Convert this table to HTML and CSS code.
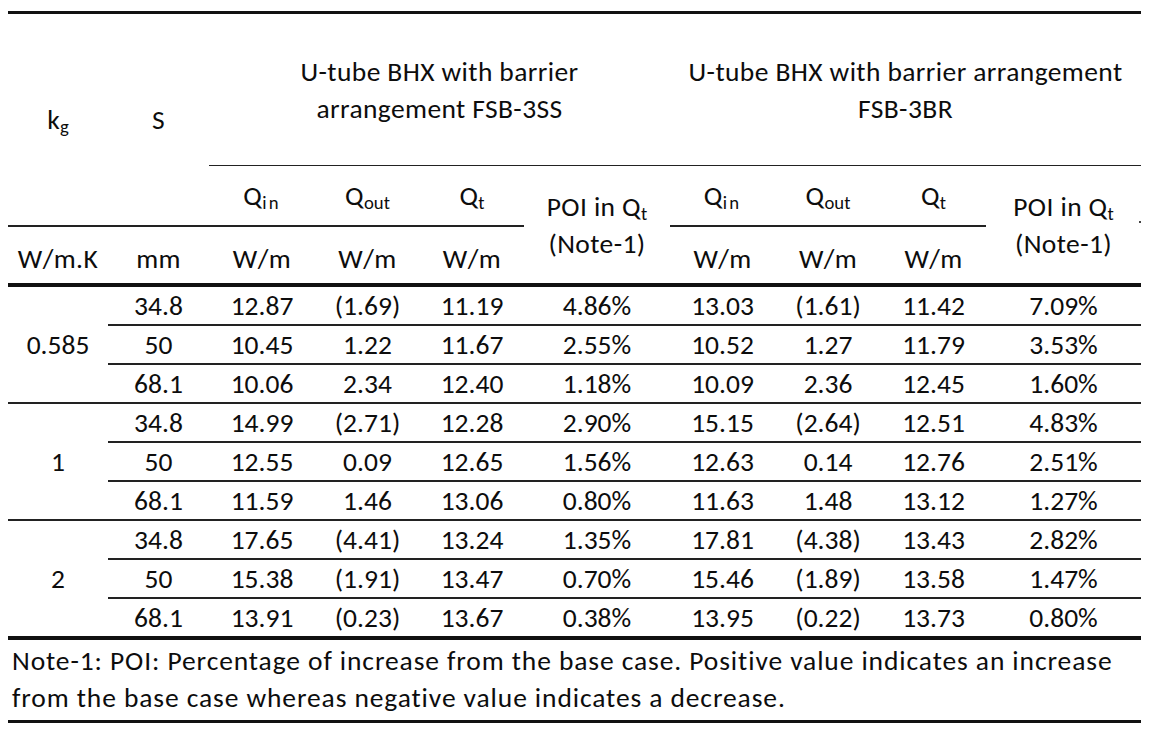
FILE: index.html
```html
<!DOCTYPE html>
<html lang="en">
<head>
<meta charset="utf-8">
<title>U-tube BHX barrier arrangements</title>
<link rel="stylesheet" href="styles.css">
</head>
<body>
<div class="page">
<table class="results">
  <colgroup>
    <col class="w-kg"><col class="w-s"><col class="w-q1"><col class="w-q2"><col class="w-q3"><col class="w-poi1">
    <col class="w-q4"><col class="w-q5"><col class="w-q6"><col class="w-poi2">
  </colgroup>
  <thead>
    <tr class="row-group">
      <th rowspan="2" class="h-left line-mid">k<sub>g</sub></th>
      <th rowspan="2" class="h-left line-mid">S</th>
      <th colspan="4" class="h-group">U-tube BHX with barrier<br>arrangement FSB-3SS</th>
      <th colspan="4" class="h-group">U-tube BHX with barrier arrangement<br>FSB-3BR</th>
    </tr>
    <tr class="row-q">
      <th class="line-mid">Q<sub class="sp">in</sub></th>
      <th class="line-mid">Q<sub>out</sub></th>
      <th class="line-mid">Q<sub>t</sub></th>
      <th rowspan="2" class="h-poi line-thick">POI in Q<sub>t</sub><br>(Note-1)</th>
      <th class="line-mid">Q<sub class="sp">in</sub></th>
      <th class="line-mid">Q<sub>out</sub></th>
      <th class="line-mid">Q<sub>t</sub></th>
      <th rowspan="2" class="h-poi line-thick dot-cell">POI in Q<sub>t</sub><br>(Note-1)<span class="dot"></span></th>
    </tr>
    <tr class="row-unit">
      <th class="line-thick">W/m.K</th>
      <th class="line-thick">mm</th>
      <th class="line-thick">W/m</th>
      <th class="line-thick">W/m</th>
      <th class="line-thick">W/m</th>
      <th class="line-thick">W/m</th>
      <th class="line-thick">W/m</th>
      <th class="line-thick">W/m</th>
    </tr>
  </thead>
  <tbody>
    <tr>
      <td rowspan="3" class="kg line-row">0.585</td>
      <td class="line-row">34.8</td><td class="line-row">12.87</td><td class="line-row">(1.69)</td><td class="line-row">11.19</td><td class="line-row">4.86%</td>
      <td class="line-row">13.03</td><td class="line-row">(1.61)</td><td class="line-row">11.42</td><td class="line-row">7.09%</td>
    </tr>
    <tr>
      <td class="line-row">50</td><td class="line-row">10.45</td><td class="line-row"><span class="ph">(</span>1.22<span class="ph">)</span></td><td class="line-row">11.67</td><td class="line-row">2.55%</td>
      <td class="line-row">10.52</td><td class="line-row"><span class="ph">(</span>1.27<span class="ph">)</span></td><td class="line-row">11.79</td><td class="line-row">3.53%</td>
    </tr>
    <tr>
      <td class="line-row">68.1</td><td class="line-row">10.06</td><td class="line-row"><span class="ph">(</span>2.34<span class="ph">)</span></td><td class="line-row">12.40</td><td class="line-row">1.18%</td>
      <td class="line-row">10.09</td><td class="line-row"><span class="ph">(</span>2.36<span class="ph">)</span></td><td class="line-row">12.45</td><td class="line-row">1.60%</td>
    </tr>
    <tr>
      <td rowspan="3" class="kg line-row">1</td>
      <td class="line-row">34.8</td><td class="line-row">14.99</td><td class="line-row">(2.71)</td><td class="line-row">12.28</td><td class="line-row">2.90%</td>
      <td class="line-row">15.15</td><td class="line-row">(2.64)</td><td class="line-row">12.51</td><td class="line-row">4.83%</td>
    </tr>
    <tr>
      <td class="line-row">50</td><td class="line-row">12.55</td><td class="line-row"><span class="ph">(</span>0.09<span class="ph">)</span></td><td class="line-row">12.65</td><td class="line-row">1.56%</td>
      <td class="line-row">12.63</td><td class="line-row"><span class="ph">(</span>0.14<span class="ph">)</span></td><td class="line-row">12.76</td><td class="line-row">2.51%</td>
    </tr>
    <tr>
      <td class="line-row">68.1</td><td class="line-row">11.59</td><td class="line-row"><span class="ph">(</span>1.46<span class="ph">)</span></td><td class="line-row">13.06</td><td class="line-row">0.80%</td>
      <td class="line-row">11.63</td><td class="line-row"><span class="ph">(</span>1.48<span class="ph">)</span></td><td class="line-row">13.12</td><td class="line-row">1.27%</td>
    </tr>
    <tr>
      <td rowspan="3" class="kg line-thick">2</td>
      <td class="line-row">34.8</td><td class="line-row">17.65</td><td class="line-row">(4.41)</td><td class="line-row">13.24</td><td class="line-row">1.35%</td>
      <td class="line-row">17.81</td><td class="line-row">(4.38)</td><td class="line-row">13.43</td><td class="line-row">2.82%</td>
    </tr>
    <tr>
      <td class="line-row">50</td><td class="line-row">15.38</td><td class="line-row">(1.91)</td><td class="line-row">13.47</td><td class="line-row">0.70%</td>
      <td class="line-row">15.46</td><td class="line-row">(1.89)</td><td class="line-row">13.58</td><td class="line-row">1.47%</td>
    </tr>
    <tr>
      <td class="line-thick">68.1</td><td class="line-thick">13.91</td><td class="line-thick">(0.23)</td><td class="line-thick">13.67</td><td class="line-thick">0.38%</td>
      <td class="line-thick">13.95</td><td class="line-thick">(0.22)</td><td class="line-thick">13.73</td><td class="line-thick">0.80%</td>
    </tr>
  </tbody>
  <tfoot>
    <tr>
      <td colspan="10" class="note">Note-1: POI: Percentage of increase from the base case. Positive value indicates an increase<br>from the base case whereas negative value indicates a decrease.</td>
    </tr>
  </tfoot>
</table>
</div>
</body>
</html>
```
FILE: styles.css
```css
html, body {
  margin: 0;
  padding: 0;
  background: #ffffff;
}

.page {
  padding: 11px 0 0 8px;
}

.results {
  width: 1133px;
  table-layout: fixed;
  border-collapse: separate;
  border-spacing: 0;
  border-top: 3px solid #111;
  font-family: Carlito, Calibri, Lato, "Open Sans", sans-serif;
  font-size: 27.5px;
  color: #0d0d0d;
}

.w-kg { width: 100px; }
.w-s { width: 101px; }
.w-q1 { width: 106px; }
.w-q2 { width: 105px; }
.w-q3 { width: 104px; }
.w-poi1 { width: 146px; }
.w-q4 { width: 105px; }
.w-q5 { width: 106px; }
.w-q6 { width: 105px; }
.w-poi2 { width: 155px; }

.results th,
.results td {
  padding: 0;
  box-sizing: border-box;
  font-weight: normal;
  text-align: center;
  vertical-align: middle;
  line-height: 37px;
  white-space: nowrap;
}

.results thead th {
  letter-spacing: 0.4px;
}

.row-group { height: 152px; }
.row-q { height: 61px; }
.row-unit { height: 60px; }

.h-group {
  border-bottom: 1px solid #222;
  padding-top: 4px;
}

.h-left {
  padding-top: 6px;
}

.h-poi {
  padding-top: 9px;
}

.line-mid { border-bottom: 2px solid #222; }
.line-row { border-bottom: 2px solid #222; }
.line-thick { border-bottom: 4px solid #111; }

.row-unit th { padding-top: 6px; }

tbody tr { height: 38.2px; }

sub {
  font-size: 0.68em;
  line-height: 0;
  vertical-align: -0.22em;
  letter-spacing: 0;
}

sub.sp { letter-spacing: 0.12em; }

.ph { visibility: hidden; }

.note {
  text-align: left !important;
  padding: 0 0 3px 4px !important;
  height: 83px;
  letter-spacing: 0.9px;
  border-bottom: 3px solid #111;
}

.dot-cell { position: relative; }

.dot {
  position: absolute;
  right: 0;
  top: 55px;
  width: 2px;
  height: 2px;
  background: #444;
}
```
